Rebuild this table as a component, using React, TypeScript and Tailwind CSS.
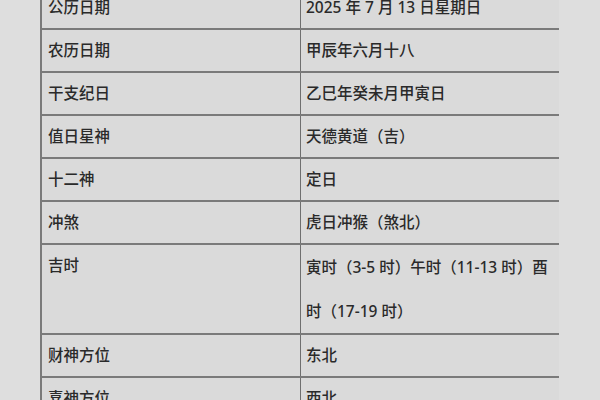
const rows: [string, string[]][] = [
  ["公历日期", ["2025 年 7 月 13 日星期日"]],
  ["农历日期", ["甲辰年六月十八"]],
  ["干支纪日", ["乙巳年癸未月甲寅日"]],
  ["值日星神", ["天德黄道（吉）"]],
  ["十二神", ["定日"]],
  ["冲煞", ["虎日冲猴（煞北）"]],
  ["吉时", ["寅时（3-5 时）午时（11-13 时）酉", "时（17-19 时）"]],
  ["财神方位", ["东北"]],
  ["喜神方位", ["西北"]],
];

export default function App() {
  return (
    <div
      className="w-[600px] h-[400px] overflow-hidden bg-[#dedede] text-[15.5px] font-medium text-[#2a2a2a]"
      style={{ fontFamily: '"Noto Sans", "Noto Sans CJK SC", sans-serif' }}
    >
      <div className="ml-[40px] -mt-[13px] w-[519px] border-l-2 border-[#7a7a7a] bg-[#dadada]">
        {rows.map(([label, value], i) => (
          <div
            key={label}
            className={
              "grid grid-cols-[258px_259px] " +
              (i === 0 ? "" : "border-t-2 border-[#7a7a7a]")
            }
          >
            <div className="pl-[6px] leading-[41px]">{label}</div>
            <div
              className={
                "pl-[5px] border-l-[1.5px] border-[#6f6f6f] " +
                (value.length > 1 ? "leading-[44px]" : "leading-[41px]")
              }
            >
              {value.map((line) => (
                <div key={line}>{line}</div>
              ))}
            </div>
          </div>
        ))}
      </div>
    </div>
  );
}
